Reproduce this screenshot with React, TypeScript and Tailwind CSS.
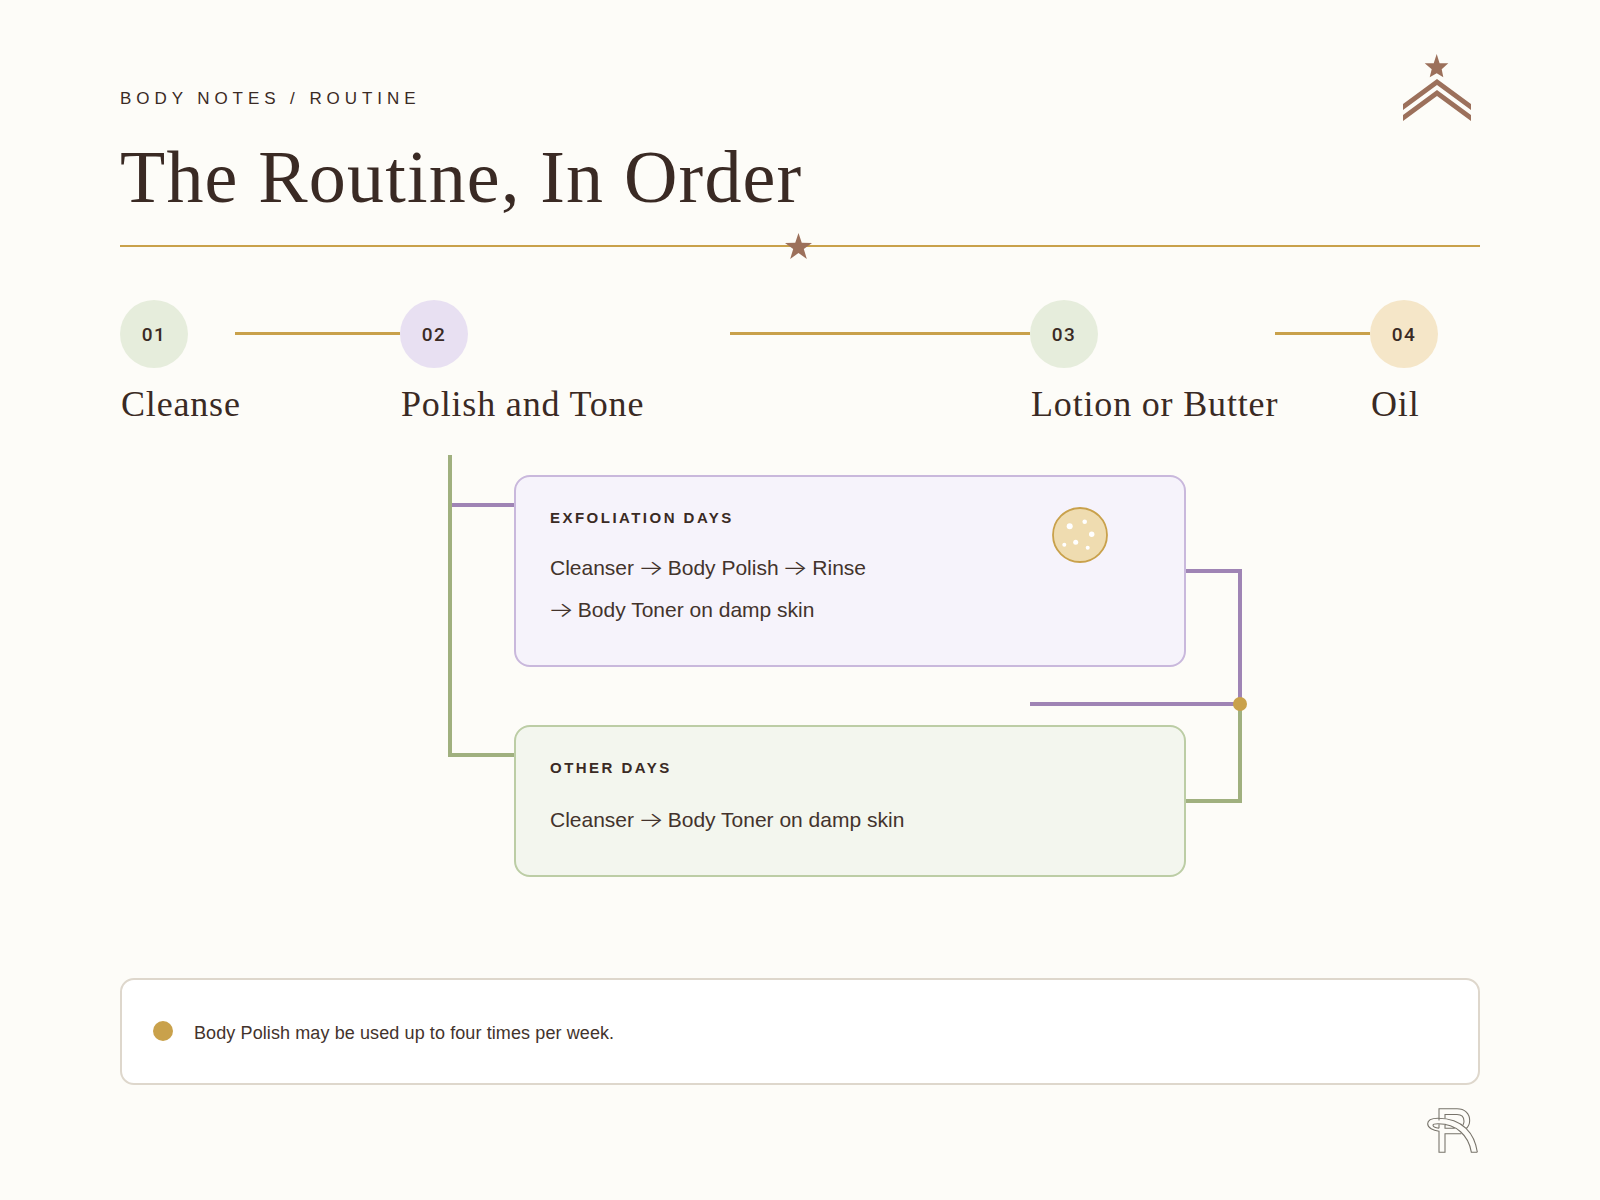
const SERIF = "font-['Liberation_Serif',serif]";

function Star({ className }: { className: string }) {
  return (
    <svg viewBox="0 0 24 24" className={className} fill="currentColor">
      <polygon points="12,0 14.9,8.6 24,8.8 16.7,14.3 19.4,23 12,17.8 4.6,23 7.3,14.3 0,8.8 9.1,8.6" />
    </svg>
  );
}

function Chevrons() {
  return (
    <svg viewBox="0 0 70 70" className="absolute right-[128px] top-[53px] h-[70px] w-[70px] text-[#9c705b]" fill="currentColor">
      <polygon points="34.7,1 37.6,10.3 46.3,10.3 39.7,16.3 41.3,24.3 34.7,20.3 27.7,24.3 29.7,16.3 22.7,10.3 31.7,10.3" />
      <polygon points="35,26 69,51 69,57 35,32 1,57 1,51" />
      <polygon points="35,37 69,62 69,68 35,43 1,68 1,62" />
    </svg>
  );
}

function Mark() {
  return (
    <svg viewBox="82 53 153 134" className="h-[45px] w-[51px] text-[#77736a]" fill="none" stroke="currentColor" strokeWidth="3.2">
      <path d="M118 90 V55 H172 C196 55 210 70 210 90 C210 100 206 108 200 114" />
      <path d="M136 84 V72 H172 C185 72 193 80 193 92 C193 96 192 100 190 103" />
      <path d="M233 185 C225 130 190 83 115 83 C95 83 84 90 84 100 C84 112 100 120 118 122 V185 H136 V130 H185" />
      <path d="M233 185 H215 C207 135 170 100 115 100 C105 100 100 102 100 104 C100 108 108 112 118 113 M118 100 V113 M136 100 V113 H165" />
    </svg>
  );
}

function Arrow() {
  return <span className="inline-block w-[22px] scale-x-[1.3] text-center font-['Inter',sans-serif] font-light">→</span>;
}

const steps = [
  { n: "01", label: "Cleanse", circle: "bg-[#e6eddc]", w: "w-[115px]" },
  { n: "02", label: "Polish and Tone", circle: "bg-[#e8e0f2]", w: "w-[330px]" },
  { n: "03", label: "Lotion or Butter", circle: "bg-[#e6eddc]", w: "w-[245px]" },
  { n: "04", label: "Oil", circle: "bg-[#f5e6c8]", w: "w-[110px]" },
];
const links = ["w-[165px]", "w-[300px]", "w-[95px]"];

function Steps() {
  return (
    <div className="mt-[53px] flex items-start">
      {steps.map((s, i) => (
        <div key={s.n} className="flex items-start">
          <div className={s.w}>
            <div className={`flex h-[68px] w-[68px] items-center justify-center rounded-full pt-[2px] ${s.circle} font-['Roboto',sans-serif] text-[19px] font-medium tracking-[0.08em]`}>
              {s.n}
            </div>
            <div className={`mt-[14px] whitespace-nowrap pl-[1px] text-[36px] leading-[44px] tracking-[0.023em] ${SERIF}`}>{s.label}</div>
          </div>
          {i < links.length && <div className={`mt-[32px] h-[3px] ${links[i]} bg-[#c9a14b]`} />}
        </div>
      ))}
    </div>
  );
}

function Cookie() {
  return (
    <svg viewBox="0 0 56 56" className="h-[56px] w-[56px] shrink-0">
      <circle cx="28" cy="28" r="27" fill="#efdcb0" stroke="#c9a14b" strokeWidth="1.8" />
      <g fill="#fff">
        <circle cx="17.7" cy="19.3" r="3" />
        <circle cx="32.7" cy="14.7" r="2.3" />
        <circle cx="39.7" cy="27.3" r="2.7" />
        <circle cx="12.3" cy="37.7" r="2" />
        <circle cx="23.7" cy="35.3" r="2.5" />
        <circle cx="35.7" cy="40.7" r="2" />
      </g>
    </svg>
  );
}

function Diagram() {
  return (
    <div className="mt-[29px] ml-[328px] flex items-start">
      {/* left rail */}
      <div className="flex h-[302px] w-[66px] flex-col border-l-4 border-[#a0b07f]">
        <div className="mt-[48px] h-[4px] bg-[#9f84b5]" />
        <div className="mt-[246px] h-[4px] bg-[#a0b07f]" />
      </div>

      <div className="w-[672px] pt-[20px]">
        <div className="flex h-[192px] justify-between rounded-[16px] border-2 border-[#c9b8dc] bg-[#f6f3fb] pl-[34px] pr-[76px] pt-[30px]">
          <div className="pt-[2px]">
            <div className="text-[15px] font-bold leading-[18px] tracking-[0.165em]">EXFOLIATION DAYS</div>
            <div className="mt-[20px] text-[21px] leading-[42px] text-[#43332c]">
              <div>Cleanser <Arrow /> Body Polish <Arrow /> Rinse</div>
              <div><Arrow /> Body Toner on damp skin</div>
            </div>
          </div>
          <Cookie />
        </div>
        <div className="ml-[516px] mt-[35px] h-[4px] bg-[#9f84b5]" />
        <div className="mt-[19px] h-[152px] rounded-[16px] border-2 border-[#bccda5] bg-[#f3f6ee] px-[34px] pt-[32px]">
          <div className="text-[15px] font-bold leading-[18px] tracking-[0.165em]">OTHER DAYS</div>
          <div className="mt-[22px] text-[21px] leading-[42px] text-[#43332c]">Cleanser <Arrow /> Body Toner on damp skin</div>
        </div>
      </div>

      {/* right joins */}
      <div className="relative mt-[114px] w-[56px]">
        <div className="h-[137px] border-y-4 border-r-4 border-[#9f84b5]" />
        <div className="h-[97px] border-b-4 border-r-4 border-[#a0b07f]" />
        <div className="absolute right-[-5px] top-[128px] h-[14px] w-[14px] rounded-full bg-[#c9a14b]" />
      </div>
    </div>
  );
}

export default function App() {
  return (
    <div className="relative h-[1200px] w-[1600px] bg-[#fdfcf8] text-[#3a2a24] font-['Liberation_Sans',sans-serif]">
      <div className="px-[120px] pt-[89px]">
        <Chevrons />
        <div className="text-[17px] font-medium leading-[20px] tracking-[0.29em]">BODY NOTES / ROUTINE</div>
        <h1 className={`mt-[26px] whitespace-nowrap text-[74px] font-normal leading-[84px] tracking-[0.016em] ${SERIF}`}>The Routine, In Order</h1>
        <div className="relative mt-[26px] h-[2px] bg-[#c9a14b]">
          <Star className="absolute left-[665px] top-[-12px] h-[27px] w-[27px] text-[#9c705b]" />
        </div>
        <Steps />
        <Diagram />

        <div className="mt-[101px] flex h-[107px] items-center gap-[21px] rounded-[14px] border-2 border-[#ded7cc] bg-white px-[31px]">
          <div className="mb-[2px] h-[20px] w-[20px] rounded-full bg-[#c9a14b]" />
          <div className="pt-[3px] text-[18px] tracking-[0.1px] text-[#43332c]">Body Polish may be used up to four times per week.</div>
        </div>

        <div className="mt-[23px] flex justify-end pr-[2px]">
          <Mark />
        </div>
      </div>
    </div>
  );
}
